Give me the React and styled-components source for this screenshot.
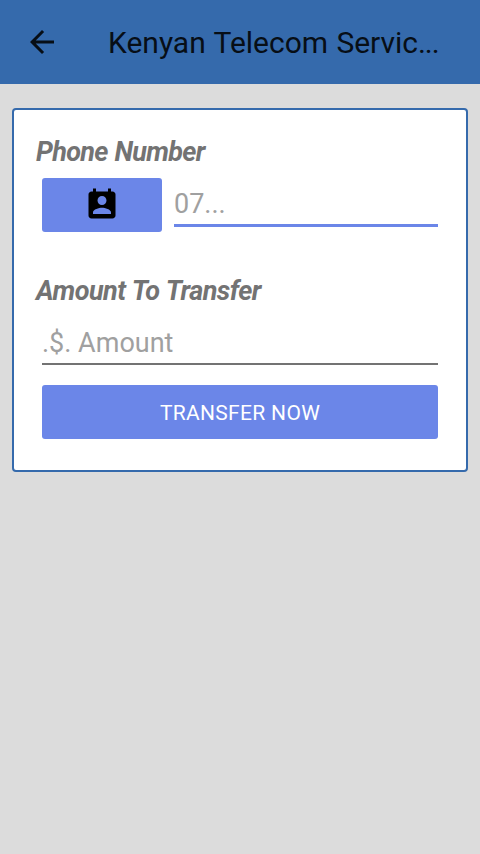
import React from "react";
import styled, { createGlobalStyle } from "styled-components";

const Global = createGlobalStyle`
  *{box-sizing:border-box}
  body{margin:0;background:#dcdcdc;font-family:Roboto,"Noto Sans",sans-serif}
`;
const Screen = styled.div`min-height:854px;background:#dcdcdc;display:flow-root;`;
const AppBar = styled.header`
  height:84px;background:#356aac;display:flex;align-items:center;padding:0 36px 0 24px;gap:48px;
`;
const BackButton = styled.button`
  border:0;background:none;padding:0;width:36px;height:36px;flex:none;display:flex;
  svg{width:36px;height:36px}
`;
const Title = styled.h1`
  margin:0;padding-top:2px;font-size:30px;font-weight:400;line-height:36px;letter-spacing:-0.01px;
  word-spacing:0.9px;color:#070e16;white-space:nowrap;
`;
const Ellipsis = styled.span`letter-spacing:-1.1px;`;
const Card = styled.main`
  margin:24px 12px 0;height:364px;border:2px solid #356aac;border-radius:4px;background:#fff;
  padding:24px 22px;
`;
const Field = styled.section`
  height:${p => p.$height}px;
`;
const Label = styled.label`
  display:block;height:36px;line-height:36px;font-size:27px;font-weight:700;font-style:italic;color:#737373;
  letter-spacing:${p => p.$tracking}px;word-spacing:1px;
`;
const Row = styled.div`display:flex;gap:12px;padding:0 6px;height:54px;margin-top:8px;`;
const Button = styled.button`
  border:0;padding:0;border-radius:3px;background:#6b86e8;color:#fff;height:54px;
  width:${p => p.$width};flex:none;display:flex;align-items:center;justify-content:center;
  font:400 21px Roboto,sans-serif;letter-spacing:0.32px;
  svg{width:36px;height:36px}
  span{padding-top:2px}
`;
const Input = styled.input`
  border:0;outline:0;padding:6px 0 0;background:none;min-width:0;flex:1;font:400 27px Roboto,sans-serif;
  height:${p => p.$active ? 49 : 48}px;border-bottom:${p => p.$active ? "3px solid #6b86e8" : "2px solid #737373"};
  &::placeholder{color:#a0a0a0;opacity:1}
`;

export default function App() {
  return (
    <Screen>
      <Global />
      <AppBar>
        <BackButton aria-label="Back">
          <svg viewBox="0 0 24 24" fill="#070e16"><path d="M20 11H7.83l5.59-5.59L12 4l-8 8 8 8 1.41-1.41L7.83 13H20v-2z" /></svg>
        </BackButton>
        <Title>Kenyan Telecom Servic<Ellipsis>...</Ellipsis></Title>
      </AppBar>
      <Card>
        <Field $height={139}>
          <Label $tracking={-0.7}>Phone Number</Label>
          <Row>
            <Button $width="120px" aria-label="Pick contact">
              <svg viewBox="0 0 24 24"><path d="M19 3h-1V1h-2v2H8V1H6v2H5c-1.11 0-2 .9-2 2v14c0 1.1.89 2 2 2h14c1.1 0 2-.9 2-2V5c0-1.1-.9-2-2-2zm-7 3c1.66 0 3 1.34 3 3s-1.34 3-3 3-3-1.34-3-3 1.34-3 3-3zm6 12H6v-1c0-2 4-3.1 6-3.1s6 1.1 6 3.1v1z" /></svg>
            </Button>
            <Input $active placeholder="07..." />
          </Row>
        </Field>
        <Field $height={104}>
          <Label $tracking={-0.56}>Amount To Transfer</Label>
          <Row><Input placeholder=".$. Amount" /></Row>
        </Field>
        <Row><Button $width="100%"><span>TRANSFER NOW</span></Button></Row>
      </Card>
    </Screen>
  );
}
